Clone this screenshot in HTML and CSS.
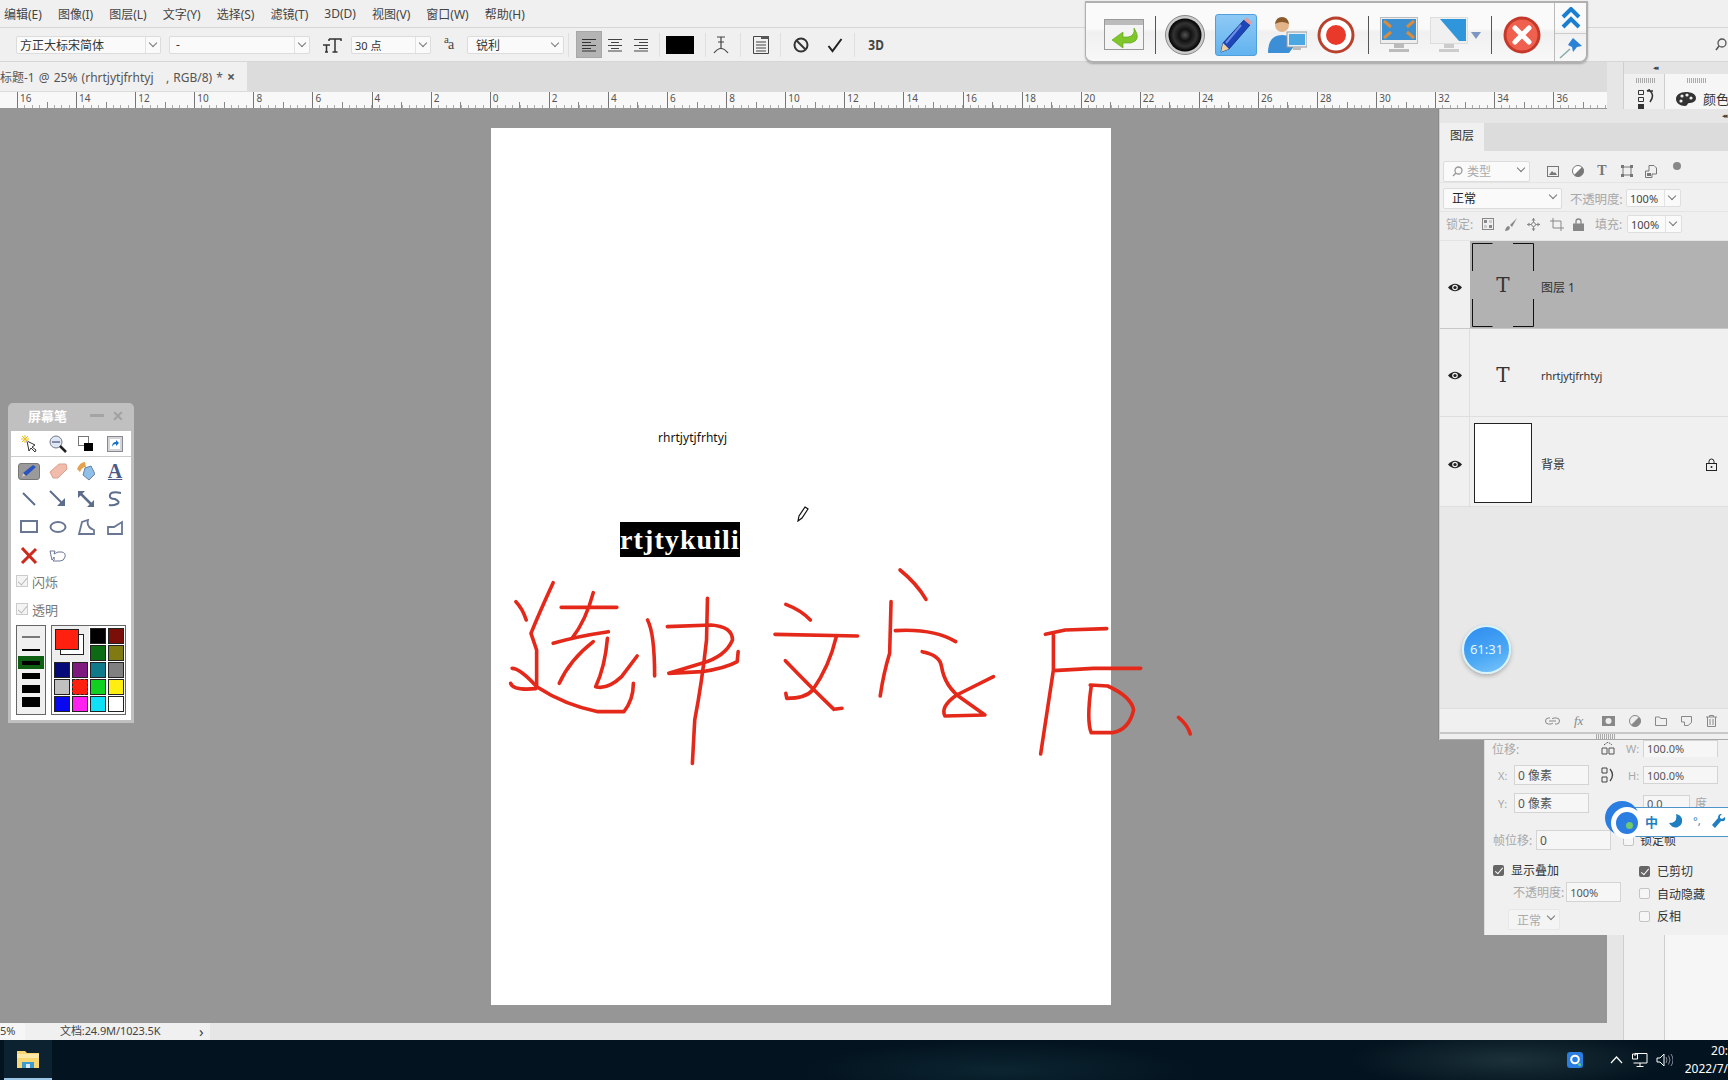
FILE: index.html
```html
<!DOCTYPE html>
<html lang="zh">
<head>
<meta charset="utf-8">
<title>Photoshop</title>
<link rel="stylesheet" href="styles.css">
</head>
<body>
<div class="app">
  <nav class="menu">
    <span>编辑(E)</span><span>图像(I)</span><span>图层(L)</span><span>文字(Y)</span><span>选择(S)</span><span>滤镜(T)</span><span>3D(D)</span><span>视图(V)</span><span>窗口(W)</span><span>帮助(H)</span>
  </nav>

  <div class="options">
    <div class="sel w-font">方正大标宋简体<i class="chev"></i></div>
    <div class="sel w-style">-<i class="chev"></i></div>
    <svg class="opt-tt" width="20" height="18" viewBox="0 0 20 18"><path d="M7 3h12v2M13 3v13M10.500 16h5M7 3v2M1 9h7M4.500 9v7M3 16h3" fill="none" stroke="#333" stroke-width="1.500"/></svg>
    <div class="sel w-size">30 点<i class="chev"></i></div>
    <span class="opt-aa"><sup>a</sup>a</span>
    <div class="sel w-aa">锐利<i class="chev"></i></div>
    <b class="vsep first"></b>
    <div class="align active"><svg width="14" height="14" viewBox="0 0 14 14"><path d="M0 1.500h14M0 4.500h9M0 7.500h14M0 10.500h9M0 13h14" stroke="#333"/></svg></div>
    <div class="align"><svg width="14" height="14" viewBox="0 0 14 14"><path d="M0 1.500h14M3 4.500h8M0 7.500h14M3 10.500h8M0 13h14" stroke="#444"/></svg></div>
    <div class="align"><svg width="14" height="14" viewBox="0 0 14 14"><path d="M0 1.500h14M5 4.500h9M0 7.500h14M5 10.500h9M0 13h14" stroke="#444"/></svg></div>
    <b class="vsep"></b>
    <div class="swatch"></div>
    <b class="vsep"></b>
    <svg class="opt-warp" width="16" height="20" viewBox="0 0 16 20"><path d="M4 2h8M8 2v11M5 7h6M1 18q7-9 14 0" fill="none" stroke="#444" stroke-width="1.200"/></svg>
    <b class="vsep"></b>
    <svg class="opt-panel" width="16" height="18" viewBox="0 0 16 18"><path d="M.500.500h15v17H.500zM3 6h10M3 9h10M3 12h10M3 15h10" fill="none" stroke="#444"/><path d="M8 0h8v3H8z" fill="#555"/></svg>
    <b class="vsep"></b>
    <svg class="opt-cancel" width="16" height="16" viewBox="0 0 16 16"><circle cx="8" cy="8" r="6.500" fill="none" stroke="#333" stroke-width="2"/><path d="M3.500 3.500l9 9" stroke="#333" stroke-width="2"/></svg>
    <svg class="opt-ok" width="16" height="16" viewBox="0 0 16 16"><path d="M1.500 9l4 5L14.500 2" fill="none" stroke="#222" stroke-width="2"/></svg>
    <b class="vsep"></b>
    <span class="opt-3d">3D</span>
    <svg class="opt-search" width="12" height="14" viewBox="0 0 12 14"><circle cx="7" cy="5" r="4" fill="none" stroke="#555" stroke-width="1.300"/><path d="M4 8l-3 4" stroke="#555" stroke-width="1.500"/></svg>
  </div>

  <div class="main">
    <div class="doc">
      <div class="tabs"><div class="tab"><span class="tab-title">标题-1 @ 25% (rhrtjytjfrhtyj &nbsp; , RGB/8) *</span><span class="tab-x">×</span></div></div>
      <div class="ruler">
        <span>16</span><span>14</span><span>12</span><span>10</span><span>8</span><span>6</span><span>4</span><span>2</span><span>0</span><span>2</span><span>4</span><span>6</span><span>8</span><span>10</span><span>12</span><span>14</span><span>16</span><span>18</span><span>20</span><span>22</span><span>24</span><span>26</span><span>28</span><span>30</span><span>32</span><span>34</span><span>36</span>
      </div>
      <div class="canvas">
        <div class="page">
          <span class="txt-small">rhrtjytjfrhtyj</span>
          <span class="txt-sel">rtjtykuili</span>
          <svg class="cursor" width="12" height="16" viewBox="0 0 12 16"><path d="M8 1l3 2-6 9-4 3 1-5z" fill="#fff" stroke="#111" stroke-width="1.200"/></svg>
        </div>
      </div>
      <div class="status"><span class="st-zoom">5%</span><span class="st-doc">文档:24.9M/1023.5K</span><span class="st-arrow">›</span></div>
    </div>
    <div class="strip"></div>
    <aside class="dock">
      <div class="dock-head">◂◂</div>
      <div class="dock-cols">
        <div class="dock-col c1">
          <i class="grip"></i>
          <svg width="18" height="20" viewBox="0 0 18 20"><path d="M1.500 1.500h5v4h-5zM1.500 8.500h5v4h-5z" fill="none" stroke="#333"/><path d="M1 15h6v5H1z" fill="#333"/><path d="M10 2h6M10 2l3-1.500M13 2q5 4 0 11" fill="none" stroke="#333" stroke-width="1.500"/></svg>
        </div>
        <div class="dock-col c2">
          <i class="grip"></i>
          <div class="dock-color">
            <svg width="20" height="16" viewBox="0 0 20 16"><path d="M10 1C4 1 0 4 0 8s4 7 9 7c3 0 2-3 4-3 3 0 7-1 7-5S15 1 10 1z" fill="#333"/><circle cx="6" cy="5" r="1.600" fill="#eee"/><circle cx="11" cy="4" r="1.600" fill="#eee"/><circle cx="15" cy="7" r="1.600" fill="#eee"/><circle cx="5" cy="10" r="1.600" fill="#eee"/></svg>
            <span>颜色</span>
          </div>
        </div>
      </div>
    </aside>
  </div>

  <footer class="taskbar">
    <div class="task-app">
      <svg width="22" height="20" viewBox="0 0 22 20"><path d="M0 2h8l2 2h12v15H0z" fill="#f7d774"/><path d="M0 5h22v4H0z" fill="#fbe9a8"/><path d="M5 13h12v6H5z" fill="#3d9bd0"/><path d="M9 15h4v4H9z" fill="#d5ecf7"/></svg>
    </div>
    <div class="tray">
      <svg width="16" height="16" viewBox="0 0 16 16"><rect width="16" height="16" rx="3" fill="#2a7de1"/><circle cx="8" cy="7.500" r="3.800" fill="none" stroke="#fff" stroke-width="2"/><circle cx="12.500" cy="12.500" r="1.500" fill="#5fd08a"/></svg>
      <svg class="tray-up" width="13" height="8" viewBox="0 0 13 8"><path d="M1 7l5.500-6L12 7" fill="none" stroke="#fff" stroke-width="1.200"/></svg>
      <svg class="tray-net" width="16" height="14" viewBox="0 0 16 14"><path d="M3 3V.500h12v9.500H1.500M8 10v3M4.500 13.500h7M.500 1h5v5H.500z" fill="none" stroke="#fff"/></svg>
      <svg class="tray-vol" width="17" height="14" viewBox="0 0 17 14"><path d="M1 5h3l4-4v12L4 9H1z" fill="none" stroke="#fff"/><path d="M10 4q2 3 0 6M12.500 2.500q3 4.500 0 9M15 1q4 6 0 12" fill="none" stroke="#889"/></svg>
      <div class="clock"><span>20:</span><span>2022/7/</span></div>
    </div>
  </footer>
</div>

<!-- 悬浮录屏工具条 -->
<div class="rec-bar">
  <svg class="t-ret" width="40" height="36" viewBox="0 0 40 36"><rect x=".5" y="2.500" width="39" height="30" fill="#f4f4f4" stroke="#999"/><rect x="1" y="3" width="38" height="5" fill="#bbb"/><path d="M30 11q8 12-3 15h-8v5L8 23l11-8v5h5q7-1 6-9z" fill="#7fc62a" stroke="#5a9e18" stroke-width=".6"/></svg>
  <b class="t-sep"></b>
  <svg class="t-cam" width="40" height="40" viewBox="0 0 40 40"><defs><radialGradient id="sp"><stop offset="0" stop-color="#555"/><stop offset=".35" stop-color="#111"/><stop offset=".7" stop-color="#333"/><stop offset="1" stop-color="#000"/></radialGradient></defs><circle cx="20" cy="20" r="19.500" fill="#ccc" stroke="#888"/><circle cx="20" cy="20" r="16.500" fill="url(#sp)"/></svg>
  <div class="t-pen"><svg width="34" height="36" viewBox="0 0 34 36"><path d="M25 3l6 5L10 32 2 35l2-9z" fill="#1d46b8" stroke="#0d2a80" stroke-width=".8"/><path d="M25 3l3-2.500 5 5L31 8z" fill="#e29a9a"/><path d="M4 26l6 6-8 3z" fill="#edcf9f"/><path d="M22 8L7 26" stroke="#6d8fe8" stroke-width="2"/></svg></div>
  <svg class="t-user" width="40" height="36" viewBox="0 0 40 36"><circle cx="15" cy="8" r="7" fill="#e2b48a"/><path d="M8 7q1-7 7-7t7 7q-7-4-14 0z" fill="#8a5a2a"/><path d="M1 36q0-18 14-18 12 0 13 10l-6 8z" fill="#3c8fd6"/><rect x="20" y="15" width="20" height="15" fill="#e6eef5" stroke="#999"/><rect x="22" y="17" width="16" height="11" fill="#4ba7e2"/><path d="M26 30h8v3h-8z" fill="#bbb"/></svg>
  <svg class="t-rec" width="38" height="38" viewBox="0 0 38 38"><circle cx="19" cy="19" r="18.500" fill="#b8402c"/><circle cx="19" cy="19" r="15.500" fill="#fff"/><circle cx="19" cy="19" r="10" fill="#e8392a"/></svg>
  <b class="t-sep s2"></b>
  <svg class="t-mon" width="38" height="36" viewBox="0 0 38 36"><rect x=".5" y=".5" width="37" height="26" fill="#eee" stroke="#bbb"/><rect x="2" y="2" width="34" height="21" fill="#3b8fd0"/><path d="M4 4l7 6M34 4l-7 6M4 21l7-6M34 21l-7-6" stroke="#d98c3c" stroke-width="3"/><path d="M14 27h10v4H14zM9 32h20v3H9z" fill="#bbb"/></svg>
  <svg class="t-mon2" width="38" height="36" viewBox="0 0 38 36"><rect x=".5" y=".5" width="37" height="26" fill="#f0f0f0" stroke="#ddd"/><path d="M10 2h26v22h-7z" fill="#2f96dc"/><path d="M14 27h10v4H14zM9 32h20v3H9z" fill="#ccc"/></svg>
  <i class="t-drop"></i>
  <b class="t-sep s3"></b>
  <svg class="t-close" width="38" height="38" viewBox="0 0 38 38"><circle cx="19" cy="19" r="18.500" fill="#c5392a"/><circle cx="19" cy="19" r="15.500" fill="#f0604e"/><path d="M12 12l14 14M26 12L12 26" stroke="#fff" stroke-width="5" stroke-linecap="round"/></svg>
  <div class="t-side">
    <div class="t-side-a"><svg width="20" height="22" viewBox="0 0 20 22"><path d="M2 10l8-8 8 8M2 20l8-8 8 8" fill="none" stroke="#1b7fd0" stroke-width="4"/></svg></div>
    <div class="t-side-b"><svg width="24" height="22" viewBox="0 0 24 22"><path d="M14 1l9 8-5 1-4 5-1-5-4-2 2-3z" fill="#2a82d6"/><path d="M11 12L1 21" stroke="#8aa" stroke-width="1.500"/></svg></div>
  </div>
</div>

<!-- 屏幕笔 -->
<div class="pen-win">
  <div class="pen-head"><span class="pen-title">屏幕笔</span><span class="pen-min"></span><span class="pen-x">✕</span></div>
  <div class="pen-body">
    <div class="pen-tools top">
      <svg width="18" height="18" viewBox="0 0 18 18"><path d="M7 6l2 10 2-3 4 4 1-2-4-3 3-2z" fill="#fff" stroke="#333"/><path d="M5 0v8M1 4h8M2 1l6 6M8 1L2 7" stroke="#e8c020"/></svg>
      <svg width="18" height="18" viewBox="0 0 18 18"><circle cx="7" cy="7" r="6" fill="#dde8f5" stroke="#778"/><path d="M11 11l6 6" stroke="#222" stroke-width="2.500"/><path d="M3 7h8" stroke="#88a" stroke-width="2"/></svg>
      <svg width="16" height="16" viewBox="0 0 16 16"><rect x=".5" y=".5" width="10" height="9" fill="#fff" stroke="#777"/><rect x="6" y="7" width="9" height="8" fill="#000"/></svg>
      <svg width="16" height="16" viewBox="0 0 16 16"><rect x=".5" y=".5" width="15" height="15" fill="#d5d5d5" stroke="#889"/><rect x="3" y="3" width="10" height="10" fill="#fff"/><path d="M5 11q0-5 4-5V4l3 3-3 3V8q-3 0-4 3z" fill="#1a6fc0"/></svg>
    </div>
    <div class="pen-tools">
      <div class="tool-on"><svg width="16" height="14" viewBox="0 0 16 14"><path d="M12 1l3 2L5 12l-4 1 1-4z" fill="#2a52c0"/><path d="M1 13l1-4 3 3z" fill="#e8c99a"/></svg></div>
      <svg width="20" height="16" viewBox="0 0 20 16"><path d="M2 9l9-8h7l1 5-9 9H5z" fill="#f1bcab" stroke="#d9a090"/></svg>
      <svg width="18" height="20" viewBox="0 0 18 20"><path d="M8 7l6-2 4 8-6 6-6-5z" fill="#8ec0ea" stroke="#6a7f9e"/><path d="M0 8q3-7 8-7l1 5q-4 0-6 5z" fill="#e4a24e"/></svg>
      <span class="tool-a">A</span>
      <svg width="16" height="16" viewBox="0 0 16 16"><path d="M2 2l12 12" stroke="#5c6d8e" stroke-width="2"/></svg>
      <svg width="18" height="18" viewBox="0 0 18 18"><path d="M1 1l12 12" stroke="#5c6d8e" stroke-width="2"/><path d="M16 16H8l8-8z" fill="#5c6d8e"/></svg>
      <svg width="18" height="18" viewBox="0 0 18 18"><path d="M4 4l10 10" stroke="#5c6d8e" stroke-width="2.500"/><path d="M1 1h7L1 8zM17 17h-7l7-7z" fill="#5c6d8e"/></svg>
      <svg width="14" height="16" viewBox="0 0 14 16"><path d="M13 2Q3 0 2 4t5 4q6 3 2 5t-8 1" fill="none" stroke="#5c6d8e" stroke-width="2"/></svg>
      <svg width="18" height="14" viewBox="0 0 18 14"><rect x="1" y="1" width="16" height="11" fill="none" stroke="#6a7794" stroke-width="2"/></svg>
      <svg width="18" height="14" viewBox="0 0 18 14"><ellipse cx="9" cy="7" rx="7.500" ry="5" fill="none" stroke="#6a7794" stroke-width="2"/></svg>
      <svg width="17" height="16" viewBox="0 0 17 16"><path d="M1 15L4 3l6-2q-2 7 6 10v4z" fill="none" stroke="#6a7794" stroke-width="1.800"/></svg>
      <svg width="17" height="15" viewBox="0 0 17 15"><path d="M1 14V7h6l8-5v12z" fill="none" stroke="#6a7794" stroke-width="1.800"/></svg>
      <svg width="18" height="17" viewBox="0 0 18 17"><path d="M2 1l14 15M16 2L2 16" stroke="#cc2a1c" stroke-width="3"/></svg>
      <svg width="17" height="14" viewBox="0 0 17 14"><path d="M1 3h5l-1 3q4-3 8-2t3 5-5 4H4q2-1 1-4-1 2-2 3z" fill="none" stroke="#6a7794"/></svg>
    </div>
    <label class="pen-check"><i class="ghost-check"></i>闪烁</label>
    <label class="pen-check"><i class="ghost-check"></i>透明</label>
    <div class="pen-pal">
      <div class="widths">
        <i class="l1"></i><i class="l2"></i><i class="l3 on"></i><i class="l4"></i><i class="l5"></i><i class="l6"></i>
      </div>
      <div class="colors">
        <div class="cur"><span class="back"></span><span class="front"></span></div>
        <i class="k1"></i><i class="k2"></i><i class="k3"></i><i class="k4"></i>
        <i class="k5"></i><i class="k6"></i><i class="k7"></i><i class="k8"></i>
        <i class="k9"></i><i class="k10"></i><i class="k11"></i><i class="k12"></i>
        <i class="k13"></i><i class="k14"></i><i class="k15"></i><i class="k16"></i>
      </div>
    </div>
  </div>
</div>

<!-- 浮动面板 -->
<div class="float">
  <section class="layers">
    <div class="l-head">◂◂</div>
    <div class="l-tabs"><div class="l-tab">图层</div></div>
    <div class="l-row filter">
      <div class="sel w-filter"><svg width="11" height="11" viewBox="0 0 11 11"><circle cx="6.500" cy="4.500" r="3.500" fill="none" stroke="#999" stroke-width="1.300"/><path d="M4 7l-3 3" stroke="#999" stroke-width="1.500"/></svg><span>类型</span><i class="chev"></i></div>
      <div class="f-icons">
        <svg width="12" height="11" viewBox="0 0 12 11"><rect x=".5" y=".5" width="11" height="10" fill="none" stroke="#777"/><path d="M2 9l3-4 2 2 1-1 2 3z" fill="#777"/></svg>
        <svg width="12" height="12" viewBox="0 0 12 12"><circle cx="6" cy="6" r="5.500" fill="#fff" stroke="#777"/><path d="M10 2a5.500 5.500 0 0 1-8 8z" fill="#777"/></svg>
        <span class="f-t">T</span>
        <svg width="12" height="12" viewBox="0 0 12 12"><path d="M2 2h8v8H2z" fill="none" stroke="#777"/><path d="M0 0h3v3H0zM9 0h3v3H9zM0 9h3v3H0zM9 9h3v3H9z" fill="#777"/></svg>
        <svg width="12" height="13" viewBox="0 0 12 13"><path d="M4 .5h5l2.500 2.500v6H7v3.500H.5V6H4z" fill="none" stroke="#777"/><path d="M2 8h4v3H2z" fill="#777"/></svg>
        <i class="f-dot"></i>
      </div>
    </div>
    <div class="l-row blend">
      <div class="sel w-blend">正常<i class="chev"></i></div>
      <span class="dim lab-op">不透明度:</span>
      <div class="pct"><span>100%</span><i class="chev"></i></div>
    </div>
    <div class="l-row lock">
      <span class="dim lab-lock">锁定:</span>
      <div class="lock-icons">
        <svg width="12" height="12" viewBox="0 0 12 12"><rect x=".5" y=".5" width="11" height="11" fill="none" stroke="#888"/><path d="M2 2h3v3H2zM7 7h3v3H7z" fill="#888"/><path d="M7 2h3v3H7zM2 7h3v3H2z" fill="#ccc"/></svg>
        <svg width="14" height="13" viewBox="0 0 14 13"><path d="M13 0L6 7l2 2zM5 8q-3 0-4 5 4 0 5-3z" fill="#888"/></svg>
        <svg width="13" height="13" viewBox="0 0 13 13"><path d="M6.500 0v13M0 6.500h13" stroke="#888"/><path d="M6.500 0l2 2.500h-4zM6.500 13l2-2.500h-4zM0 6.500l2.500-2v4zM13 6.500l-2.500-2v4z" fill="#888"/><circle cx="6.500" cy="6.500" r="2" fill="#f0f0f0" stroke="#888"/></svg>
        <svg width="14" height="13" viewBox="0 0 14 13"><path d="M0 3h11v10M3 0v10h11" fill="none" stroke="#888"/></svg>
        <svg width="11" height="13" viewBox="0 0 11 13"><path d="M3 6V3.500a2.500 2.500 0 0 1 5 0V6" fill="none" stroke="#888" stroke-width="1.300"/><rect y="5.500" width="11" height="7.500" fill="#888"/></svg>
      </div>
      <span class="dim lab-fill">填充:</span>
      <div class="pct"><span>100%</span><i class="chev"></i></div>
    </div>

    <div class="layer sel-layer">
      <div class="eye-cell"><svg class="eye" width="14" height="9" viewBox="0 0 14 9"><path d="M0 4.500Q7-3 14 4.500 7 12 0 4.500z" fill="#222"/><circle cx="7" cy="4.500" r="2.800" fill="#eee"/><circle cx="7" cy="4.500" r="1.600" fill="#222"/></svg></div>
      <div class="thumb t-text"><svg class="brackets" width="62" height="84" viewBox="0 0 62 84"><path d="M.5 28V.5h20M41 .5h20.500V28M.5 56v27.500h20M41 83.500h20.500V56" fill="none" stroke="#111"/></svg><span>T</span></div>
      <span class="l-name">图层 1</span>
    </div>
    <div class="layer">
      <div class="eye-cell"><svg class="eye" width="14" height="9" viewBox="0 0 14 9"><path d="M0 4.500Q7-3 14 4.500 7 12 0 4.500z" fill="#222"/><circle cx="7" cy="4.500" r="2.800" fill="#eee"/><circle cx="7" cy="4.500" r="1.600" fill="#222"/></svg></div>
      <div class="thumb t-text plain"><span>T</span></div>
      <span class="l-name small">rhrtjytjfrhtyj</span>
    </div>
    <div class="layer bg">
      <div class="eye-cell"><svg class="eye" width="14" height="9" viewBox="0 0 14 9"><path d="M0 4.500Q7-3 14 4.500 7 12 0 4.500z" fill="#222"/><circle cx="7" cy="4.500" r="2.800" fill="#eee"/><circle cx="7" cy="4.500" r="1.600" fill="#222"/></svg></div>
      <div class="thumb t-bg"></div>
      <span class="l-name">背景</span>
      <svg class="l-lock" width="11" height="13" viewBox="0 0 11 13"><path d="M3 5.500V3.500a2.500 2.500 0 0 1 5 0v2" fill="none" stroke="#222"/><rect x=".5" y="5.500" width="10" height="7" fill="none" stroke="#222"/><circle cx="5.500" cy="9" r="1" fill="#222"/></svg>
    </div>
    <div class="l-empty"></div>
    <div class="l-foot">
      <svg width="15" height="8" viewBox="0 0 15 8"><path d="M5 1H3.500a3 3 0 0 0 0 6H6a3 3 0 0 0 2-1M10 7h1.500a3 3 0 0 0 0-6H9a3 3 0 0 0-2 1M4 4h7" fill="none" stroke="#888"/></svg>
      <span class="fx">fx</span>
      <svg width="13" height="10" viewBox="0 0 13 10"><rect width="13" height="10" fill="#888"/><circle cx="6.500" cy="5" r="3" fill="#eee"/></svg>
      <svg width="12" height="12" viewBox="0 0 12 12"><circle cx="6" cy="6" r="5.500" fill="#eee" stroke="#888"/><path d="M10 2a5.500 5.500 0 0 1-8 8z" fill="#888"/></svg>
      <svg width="12" height="10" viewBox="0 0 12 10"><path d="M.5 1h4l1 1.500h6v7H.5z" fill="none" stroke="#888"/></svg>
      <svg width="11" height="10" viewBox="0 0 11 10"><path d="M.5.500h10v6L7 9.500H3.500V6H.5z" fill="none" stroke="#888"/></svg>
      <svg width="11" height="12" viewBox="0 0 11 12"><path d="M0 2h11M3.500 2V.5h4V2M1.500 2v9.500h8V2M4 4v6M7 4v6" fill="none" stroke="#888"/></svg>
    </div>
    <div class="l-grip"><i class="grip"></i></div>
  </section>

  <section class="props">
    <div class="p-row r1">
      <span class="dim p-lab">位移:</span>
      <svg class="p-ico" width="14" height="13" viewBox="0 0 14 13"><path d="M1 6h5v6H1zM8 6h5v6H8z" fill="none" stroke="#555"/><path d="M3 3l4-3 4 3" fill="none" stroke="#555" stroke-dasharray="2 1"/></svg>
      <span class="dim p-w">W:</span>
      <span class="inp i-wh">100.0%</span>
    </div>
    <div class="p-row r2">
      <span class="dim p-xy">X:</span>
      <span class="inp i-xy">0 像素</span>
      <svg class="p-ico b" width="14" height="16" viewBox="0 0 14 16"><path d="M1 1h5v5H1zM1 10h5v5H1z" fill="none" stroke="#444"/><path d="M9 2q5 6 0 12" fill="none" stroke="#444" stroke-width="1.300"/></svg>
      <span class="dim p-h">H:</span>
      <span class="inp i-wh">100.0%</span>
    </div>
    <div class="p-row r3">
      <span class="dim p-xy">Y:</span>
      <span class="inp i-xy">0 像素</span>
      <span class="inp i-ang">0.0</span>
      <span class="dim p-deg">度</span>
    </div>
    <div class="p-row r4">
      <span class="dim p-off">帧位移:</span>
      <span class="inp i-xy off">0</span>
      <i class="cb empty lock-frame"></i>
      <span class="p-txt">锁定帧</span>
    </div>
    <div class="p-bottom">
      <div class="p-left">
        <div class="p-chk"><i class="cb on"></i><span>显示叠加</span></div>
        <div class="p-op"><span class="dim">不透明度:</span><span class="inp i-op">100%</span></div>
        <div class="sel w-mode">正常<i class="chev"></i></div>
      </div>
      <div class="p-right">
        <div class="p-chk"><i class="cb on"></i><span>已剪切</span></div>
        <div class="p-chk"><i class="cb empty"></i><span>自动隐藏</span></div>
        <div class="p-chk"><i class="cb empty"></i><span>反相</span></div>
      </div>
    </div>
  </section>
</div>

<!-- 计时器 -->
<div class="timer">61:31</div>

<!-- 输入法状态条 -->
<div class="ime">
  <span class="ime-q"><i></i></span>
  <span class="ime-zh">中</span>
  <svg width="13" height="14" viewBox="0 0 13 14"><path d="M7 0q2 9-7 9 4 6 9 4t4-8Q12 1 7 0z" fill="#1f7fc0"/></svg>
  <span class="ime-p">°,</span>
  <svg width="14" height="14" viewBox="0 0 14 14"><path d="M13 3l-3 2-2-1V2l2-2Q6-.5 6 4L0 11l3 3 6-7q5 1 4-4z" fill="#1f7fc0"/></svg>
</div>

<!-- 屏幕笔手写批注 -->
<svg class="ink" width="740" height="380" viewBox="0 0 1568 1140" preserveAspectRatio="none">
  <g fill="none" stroke="#e4291a" stroke-linecap="round" stroke-linejoin="round">
    <path d="M76 605Q90 625 98 660"/>
    <path d="M155 548Q125 640 108 700L120 750V860"/>
    <path d="M68 805Q85 805 120 860Q180 915 250 935H305Q325 900 325 850"/>
    <path d="M65 850Q70 872 118 866"/>
    <path d="M172 622H290M240 578Q225 660 195 715M155 730Q200 710 272 695"/>
    <path d="M240 725Q190 780 168 850M270 715Q265 800 245 860Q270 870 300 830L333 768"/>
    <path d="M355 660Q370 700 370 828"/>
    <path d="M397 680L490 675Q535 680 535 720Q520 770 470 790L400 820L470 815Q520 805 545 785L547 755"/>
    <path d="M482 595L480 720Q470 850 455 960L450 1090"/>
    <path d="M648 613Q680 630 700 660M625 703L800 708"/>
    <path d="M755 710Q740 800 705 870Q690 895 650 895L648 880M647 782Q700 860 750 928L767 925"/>
    <path d="M890 510Q925 550 945 598M871 605L868 760Q855 820 848 888M880 692Q960 685 1008 725"/>
    <path d="M937 755Q975 765 978 800Q985 860 1020 895L1070 945L985 948Q975 920 1010 885L1088 830"/>
    <path d="M1198 703L1240 690L1328 686M1215 705V810L1188 1062M1215 812L1300 805H1400"/>
    <path d="M1293 855L1330 858Q1380 890 1385 930Q1375 990 1340 998H1295Q1285 960 1295 860"/>
    <path d="M1480 952Q1500 975 1505 1002"/>
  </g>
</svg>
</body>
</html>
```

FILE: styles.css
```css
* { box-sizing: border-box; }
html, body { margin: 0; height: 100%; overflow: hidden; }
body {
  position: relative;
  width: 1728px;
  height: 1080px;
  font: 12px "Noto Sans", "Noto Sans CJK SC", sans-serif;
  color: #333;
  background: #969696;
}
i { display: block; font-style: normal; }
b { font-weight: normal; }
svg { display: block; flex: none; }

.app { display: flex; flex-direction: column; height: 1080px; }

/* menu */
.menu {
  flex: 0 0 28px;
  display: flex;
  align-items: center;
  gap: 16px;
  padding: 0 0 0 4px;
  background: #f0f0f0;
  border-bottom: 1px solid #d6d6d6;
  font-size: 12px;
  color: #444;
}

/* options bar */
.options {
  flex: 0 0 34px;
  display: flex;
  align-items: center;
  padding: 0 0 0 16px;
  background: #f0f0f0;
  border-bottom: 1px solid #d6d6d6;
}
.sel {
  position: relative;
  display: flex;
  align-items: center;
  height: 18px;
  padding-left: 3px;
  background: #fafafa;
  border: 1px solid #dcdcdc;
  border-radius: 2px;
  font-size: 12px;
  color: #333;
}
.chev {
  margin-left: auto;
  width: 15px;
  height: 100%;
  border-left: 1px solid #e2e2e2;
  position: relative;
}
.chev::after {
  content: "";
  position: absolute;
  left: 4px;
  top: 3px;
  width: 5px;
  height: 5px;
  border: solid #777;
  border-width: 0 1px 1px 0;
  transform: rotate(45deg);
}
.w-font { width: 145px; }
.w-style { width: 141px; margin-left: 8px; padding-left: 6px; }
.opt-tt { margin-left: 12px; }
.w-size { width: 80px; margin-left: 9px; font-size: 11px; }
.opt-aa { margin-left: 13px; width: 15px; font: 14px "Liberation Serif", serif; color: #444; letter-spacing: -1px; }
.opt-aa sup { font-size: 11px; line-height: 0; }
.w-aa { width: 97px; margin-left: 8px; padding-left: 8px; }
.w-aa .chev { border-left: 0; }
.vsep { flex: none; width: 1px; height: 24px; background: #dfdfdf; margin: 0 5px; }
.vsep.first { margin: 0 7px 0 4px; }
.align { display: flex; align-items: center; justify-content: center; width: 26px; height: 27px; }
.align.active { background: #b4b4b4; border: 1px solid #a8a8a8; }
.swatch { width: 28px; height: 18px; background: #000; margin: 0 6px 0 1px; }
.opt-warp { margin: 0 6px 0 2px; }
.opt-panel { margin: 0 6px 0 7px; }
.opt-cancel { margin-left: 7px; }
.opt-ok { margin: 0 6px 0 18px; }
.opt-3d { margin-left: 7px; font-weight: 700; font-size: 14px; color: #444; transform: scaleX(.85); }
.opt-search { margin-left: auto; transform: translateX(-1px); }

/* main */
.main { flex: 1; display: flex; min-height: 0; }
.doc { flex: 0 0 1607px; display: flex; flex-direction: column; min-width: 0; }
.tabs { flex: 0 0 30px; background: #dcdcdc; }
.tab {
  display: flex;
  align-items: center;
  width: 247px;
  height: 29px;
  background: #f0f0f0;
  white-space: pre;
  font-size: 12px;
  color: #555;
}
.tab-title { flex: 0 0 224px; font-size: 12px; word-spacing: 1px; }
.tab-x { margin-left: 3px; font-weight: 700; font-size: 14px; color: #555; }

.ruler {
  flex: 0 0 16px;
  display: flex;
  overflow: hidden;
  padding-left: 17px;
  background: #f8f8f8;
}
.ruler span {
  flex: 0 0 59.100px;
  height: 16px;
  padding: 1px 0 0 3px;
  font-size: 10px;
  line-height: 11px;
  color: #555;
  background:
    linear-gradient(#777, #777) 0 0 / 1px 100% no-repeat,
    linear-gradient(#888, #888) 29.500px 100% / 1px 6px no-repeat,
    repeating-linear-gradient(90deg, #aaa 0 1px, transparent 1px 7.390px) 0 100% / 100% 3px no-repeat;
}

.canvas { flex: 1; min-height: 0; padding: 20px 0 0 491px; background: #969696; }
.page { position: relative; width: 620px; height: 877px; background: #fff; }
.txt-small { position: absolute; left: 167px; top: 302px; font-size: 12px; line-height: 16px; letter-spacing: .05px; color: #111; }
.txt-sel {
  position: absolute;
  left: 129px;
  top: 394px;
  width: 120px;
  height: 35px;
  background: #000;
  color: #fff;
  font: 700 28px/35px "Liberation Serif", serif;
  letter-spacing: 1.100px;
  white-space: nowrap;
  overflow: hidden;
}
.cursor { position: absolute; left: 306px; top: 378px; }

.status { flex: 0 0 17px; display: flex; align-items: center; background: #e6e6e6; font-size: 11px; color: #444; }
.st-zoom { width: 25px; height: 100%; background: #f6f6f6; line-height: 16px; }
.st-doc { width: 185px; height: 100%; background: #f0f0f0; padding-left: 35px; line-height: 16px; letter-spacing: -.1px; }
.st-arrow { position: relative; left: -11px; font-size: 15px; line-height: 15px; }

.strip { flex: 0 0 17px; background: #e6e6e6; border-right: 1px solid #cfcfcf; }
.dock { flex: 0 0 104px; display: flex; flex-direction: column; background: #f0f0f0; }
.dock-head { flex: 0 0 12px; background: #e4e4e4; font-size: 7px; line-height: 12px; padding-left: 29px; color: #444; letter-spacing: -2px; }
.dock-cols { flex: 1; display: flex; }
.dock-col { display: flex; flex-direction: column; align-items: center; }
.dock-col.c1 { flex: 0 0 41px; border-right: 1px solid #cfcfcf; padding-left: 4px; }
.dock-col.c2 { flex: 1; background: #f6f6f6; }
.grip { width: 20px; height: 5px; margin: 4px 0 6px; background: repeating-linear-gradient(90deg, #aaa 0 1px, transparent 1px 2px); }
.dock-color { display: flex; align-items: center; gap: 7px; margin-left: 11px; font-size: 13px; white-space: nowrap; }

/* taskbar */
.taskbar {
  flex: 0 0 40px;
  display: flex;
  justify-content: space-between;
  background:
    radial-gradient(ellipse 160px 30px at 1510px 20px, #1b3138, transparent),
    radial-gradient(ellipse 200px 30px at 1000px 30px, #0b2530, transparent),
    #03131f;
  color: #fff;
}
.task-app { width: 48px; margin-left: 4px; height: 100%; background: #0d2230; border-bottom: 2px solid #9cc6e6; display: flex; align-items: center; justify-content: center; padding-bottom: 1px; }
.tray { display: flex; align-items: center; width: 161px; }
.tray-up { margin-left: 27px; }
.tray-net { margin-left: 9px; }
.tray-vol { margin-left: 8px; }
.clock { flex: 1; display: flex; flex-direction: column; align-items: flex-end; margin-left: 7px; font-size: 12px; line-height: 18px; white-space: nowrap; overflow: hidden; }

/* recorder bar */
.rec-bar {
  position: absolute;
  left: 1085px;
  top: 1px;
  width: 503px;
  height: 62px;
  display: flex;
  align-items: center;
  padding-top: 6px;
  background: linear-gradient(#fafafa 0 44%, #f0f0f0 50%, #f8f8f8);
  border: 2px solid #b0b0b0;
  border-width: 2px 2px 2px 1px;
  border-radius: 0 0 8px 8px;
  box-shadow: 0 1px 2px rgba(0,0,0,.25);
}
.t-ret { margin-left: 18px; }
.t-sep { flex: none; width: 1px; height: 38px; background: #555; margin: 0 9px 0 11px; }
.t-sep.s2 { margin: 0 11px 0 13px; }
.t-sep.s3 { margin: 0 11px 0 10px; }
.t-pen { flex: none; display: flex; align-items: center; justify-content: center; width: 42px; height: 42px; margin: 0 10px; background: linear-gradient(#8ec9f5, #62b3ef); border: 1px solid #4f9fdd; border-radius: 3px; }
.t-user { margin-right: 10px; }
.t-mon { margin-right: 12px; }
.t-drop { flex: none; width: 0; height: 0; margin-left: 3px; border: 5px solid transparent; border-top: 7px solid #7b97bf; border-bottom: 0; }
.t-side { margin-left: auto; flex: 0 0 32px; align-self: stretch; margin-top: -6px; display: flex; flex-direction: column; border-left: 1px solid #bbb; }
.t-side-a { flex: 0 0 31px; display: flex; align-items: center; justify-content: center; border-bottom: 1px solid #ccc; }
.t-side-b { flex: 1; display: flex; align-items: center; justify-content: center; }

/* screen pen */
.pen-win {
  position: absolute;
  left: 8px;
  top: 403px;
  width: 126px;
  height: 320px;
  padding: 0 3px 3px;
  background: #c0c0c0;
  border-radius: 5px 5px 0 0;
}
.pen-head { display: flex; align-items: center; height: 28px; padding-bottom: 3px; color: #fff; }
.pen-title { margin-left: 17px; font-size: 13px; font-weight: 700; }
.pen-min { width: 14px; height: 3px; background: #a4a4a4; margin-left: 23px; }
.pen-x { margin-left: 8px; font-size: 14px; font-weight: 700; color: #a0a0a0; }
.pen-body { height: 289px; background: #fff; }
.pen-tools { display: grid; grid-template-columns: repeat(4, 28.600px); grid-auto-rows: 28px; padding-left: 4px; justify-items: center; align-items: center; }
.pen-tools.top { grid-auto-rows: 25px; border-bottom: 1px solid #ccc; height: 26px; }
.tool-on { display: flex; align-items: center; justify-content: center; width: 22px; height: 17px; background: #9a9a9a; border: 1px solid #777; border-radius: 3px; }
.tool-a { font: 700 20px/20px "Liberation Serif", serif; color: #4c5a88; text-decoration: underline; text-decoration-thickness: 1px; }
.pen-check { display: flex; align-items: center; gap: 4px; height: 28px; padding: 0 0 4px 5px; font-size: 13px; color: #777; }
.ghost-check { position: relative; width: 12px; height: 12px; background: #f4f4f4; border: 1px solid #ccc; }
.ghost-check::after { content: ""; position: absolute; left: 3px; top: 0; width: 4px; height: 8px; border: solid #bbb; border-width: 0 1.500px 1.500px 0; transform: rotate(40deg); }
.pen-pal { display: flex; gap: 5px; padding-left: 5px; height: 90px; }
.widths { width: 30px; border: 1px solid #666; background: #f0f0f0; padding-top: 4px; display: flex; flex-direction: column; align-items: stretch; }
.widths i { position: relative; height: 13px; flex: none; }
.widths i::after { content: ""; position: absolute; left: 5px; right: 5px; top: 50%; background: #000; transform: translateY(-50%); }
.widths .l1::after { height: 1px; }
.widths .l2::after { height: 2px; }
.widths .l3 { background: #0d5f12; margin: 0 1px; }
.widths .l3::after { height: 4px; left: 4px; right: 4px; }
.widths .l4::after { height: 6px; }
.widths .l5::after { height: 8px; }
.widths .l6::after { height: 10px; }
.colors { width: 75px; border: 1px solid #666; display: grid; grid-template-columns: repeat(4, 18px); grid-auto-rows: 17px; padding: 2px 0 0 2px; align-items: start; }
.colors i { width: 16px; height: 16px; border: 1px solid #222; }
.cur { grid-column: span 2; grid-row: span 2; position: relative; background: #eee; margin: -2px 0 0 -2px; width: 37px; height: 36px; }
.cur .front { position: absolute; left: 3px; top: 3px; width: 24px; height: 21px; background: #ff2010; border: 1px solid #222; z-index: 1; }
.cur .back { position: absolute; left: 8px; top: 8px; width: 24px; height: 21px; background: #fff; border: 1px solid #222; }
.k1 { background: #000; } .k2 { background: #7a0f0a; }
.k3 { background: #0c6b12; } .k4 { background: #7f7a12; }
.k5 { background: #050a78; } .k6 { background: #7f1a80; } .k7 { background: #0f7a8a; } .k8 { background: #808080; }
.k9 { background: #c0c0c0; } .colors .k10 { background: #ff2010; border-style: dashed; }
.k11 { background: #10d020; } .k12 { background: #ffee10; }
.k13 { background: #0808f0; } .k14 { background: #ff20f0; } .k15 { background: #10e0f5; } .k16 { background: #fff; }

/* floating panels */
.float { position: absolute; left: 1439px; top: 109px; width: 289px; display: flex; flex-direction: column; align-items: flex-end; }
.layers { width: 289px; height: 631px; display: flex; flex-direction: column; background: #f0f0f0; border-left: 1px solid #d0d0d0; box-shadow: -1px 0 0 #8a8a8a; }
.l-head { flex: 0 0 14px; background: #e6e6e6; font-size: 7px; line-height: 13px; text-align: right; padding-right: 2px; letter-spacing: -2px; color: #444; }
.l-tabs { flex: 0 0 28px; background: #dcdcdc; }
.l-tab { width: 44px; height: 28px; background: #f0f0f0; text-align: center; line-height: 26px; font-size: 12px; }
.l-row { display: flex; align-items: center; border-bottom: 1px solid #e4e4e4; padding-left: 3px; }
.l-row.filter { flex: 0 0 32px; padding-top: 9px; }
.l-row.blend { flex: 0 0 29px; padding-top: 2px; }
.l-row.lock { flex: 0 0 29px; padding: 0 0 4px 6px; }
.w-filter { width: 87px; height: 21px; padding-left: 8px; gap: 4px; color: #aaa; }
.w-filter .chev { border: 0; }
.w-blend { width: 119px; height: 21px; padding-left: 8px; color: #222; }
.w-blend .chev { border: 0; }
.f-icons { display: flex; align-items: center; padding-left: 17px; gap: 12.500px; color: #777; }
.f-t { font: 700 14px/14px "Liberation Serif", serif; width: 12px; text-align: center; }
.f-dot { width: 8px; height: 8px; border-radius: 50%; background: #888; margin: -10px 0 0 3px; }
.dim { color: #a8a8a8; white-space: nowrap; }
.lab-op { margin-left: 8px; width: 56px; font-size: 12.500px; letter-spacing: -.2px; }
.lab-lock { width: 36px; font-size: 12px; }
.lock-icons { display: flex; align-items: center; gap: 9.500px; padding-right: 11px; }
.lab-fill { width: 32px; font-size: 12px; }
.pct { display: flex; align-items: center; width: 55px; height: 18px; background: #fafafa; border: 1px solid #dedede; border-radius: 2px; font-size: 11px; padding-left: 3px; color: #444; }
.pct .chev { width: 16px; }
.layer { display: flex; align-items: center; flex: 0 0 88px; border-bottom: 1px solid #dedede; }
.layer.bg { flex: 0 0 90px; }
.sel-layer { background: linear-gradient(90deg, #f0f0f0 0 30px, #b2b2b2 30px); border-bottom-color: #c8c8c8; }
.eye-cell { flex: 0 0 30px; align-self: stretch; display: flex; align-items: center; justify-content: center; border-right: 1px solid #dedede; padding-top: 5px; }
.sel-layer .eye-cell { border-right: 0; }
.thumb { position: relative; flex: none; margin-left: 2px; width: 62px; height: 84px; display: flex; align-items: center; justify-content: center; }
.t-text span { font: 20px/20px "DejaVu Serif", serif; color: #333; }
.t-text.plain { padding-top: 4px; }
.brackets { position: absolute; left: 0; top: 0; }
.thumb.t-bg { margin: 2px 0 0 4px; width: 58px; height: 80px; background: #fff; border: 1px solid #222; }
.l-name { margin: 5px 0 0 7px; font-size: 12px; color: #333; }
.bg .l-name { margin-left: 9px; }
.l-name.small { font-size: 11px; letter-spacing: -.1px; }
.l-lock { margin: 5px 11px 0 auto; }
.l-empty { flex: 1; background: #e8e8e8; }
.l-foot { flex: 0 0 24px; display: flex; align-items: center; gap: 14px; padding-left: 105px; background: #f0f0f0; border-top: 1px solid #dedede; }
.fx { font: italic 13px/13px "Liberation Serif", serif; color: #888; width: 14px; }
.l-grip { flex: 0 0 8px; display: flex; justify-content: center; background: #f0f0f0; border-top: 2px solid #c8c8c8; border-bottom: 1px solid #aaa; padding-left: 44px; }
.l-grip .grip { margin: 0; height: 5px; }

.props { width: 244px; height: 195px; background: #f0f0f0; font-size: 12px; box-shadow: inset 1px 0 0 #ddd; }
.p-row { display: flex; align-items: center; }
.inp { display: flex; align-items: center; background: #f6f6f6; border: 1px solid #d4d4d4; padding-left: 3px; color: #555; font-size: 11px; white-space: nowrap; }
.i-wh { width: 75px; height: 18px; }
.i-xy { width: 75px; height: 20px; font-size: 12px; }
.i-ang { width: 47px; height: 17px; margin-left: 54px; }
.i-op { width: 55px; height: 20px; margin-left: 2px; }
.r1 { height: 17px; overflow: hidden; }
.p-lab { margin-left: 8px; width: 100px; font-size: 12px; }
.p-ico { margin-left: 9px; }
.p-ico.b { margin-left: 12px; }
.p-w { margin-left: 11px; width: 17px; font-size: 11px; }
.r2 { height: 20px; margin-top: 8px; }
.p-xy { margin-left: 14px; width: 16px; font-size: 11px; }
.p-h { margin-left: 13px; width: 15px; font-size: 11px; }
.r3 { height: 20px; margin-top: 8px; }
.p-deg { margin-left: 5px; }
.r4 { height: 20px; margin-top: 17px; }
.p-off { margin-left: 9px; width: 43px; font-size: 12px; }
.p-txt { color: #333; margin-left: 6px; }
.cb { position: relative; flex: none; width: 11px; height: 11px; border-radius: 2px; }
.cb.empty { background: #f6f6f6; border: 1px solid #c4c4c4; }
.cb.on { background: #666; }
.cb.on::after { content: ""; position: absolute; left: 4px; top: 1px; width: 3px; height: 7px; border: solid #fff; border-width: 0 1.500px 1.500px 0; transform: rotate(40deg); }
.lock-frame { margin-left: 12px; }
.p-bottom { display: flex; margin-top: 10px; }
.p-left { flex: 0 0 155px; padding-left: 9px; }
.p-chk { display: flex; align-items: center; gap: 7px; height: 20px; color: #333; }
.p-right .p-chk { height: 22.500px; }
.p-op { display: flex; align-items: center; height: 20px; margin: 2px 0 0 20px; font-size: 12px; }
.w-mode { width: 52px; height: 21px; margin: 7px 0 0 15px; padding-left: 8px; background: #f4f4f4; color: #aaa; border-color: #e8e8e8; }
.w-mode .chev { border: 0; }

.timer {
  position: absolute;
  left: 1462px;
  top: 625px;
  width: 49px;
  height: 49px;
  border-radius: 50%;
  background: linear-gradient(160deg, #2f8cf0, #4aa8f5 60%, #7cc6fb);
  border: 2px solid #d8f4fb;
  box-shadow: 0 2px 4px rgba(0,0,0,.25);
  color: #e6f6ff;
  font-size: 13px;
  line-height: 45px;
  text-align: center;
}
.ime {
  position: absolute;
  left: 1605px;
  top: 801px;
  width: 123px;
  height: 34px;
  display: flex;
  align-items: center;
  gap: 11px;
  padding-left: 40px;
}
.ime::before {
  content: "";
  position: absolute;
  left: 28px;
  top: 6px;
  right: 0;
  height: 28px;
  background: #fff;
  border: 1px solid #4d94c8;
  border-right: 0;
}
.ime > * { position: relative; z-index: 1; }
.ime .ime-q {
  position: absolute;
  left: 0;
  top: 0;
  width: 34px;
  height: 34px;
  border-radius: 50%;
  background: #2a7de1;
}
.ime-q::before { content: ""; position: absolute; left: 6px; top: 6px; width: 22px; height: 22px; border-radius: 50%; background: #2a7de1; border: 5px solid #fff; }
.ime-q i { position: absolute; left: 21px; top: 21px; width: 7px; height: 7px; border-radius: 50%; background: #6fc96f; z-index: 1; }
.ime-zh { font-size: 13px; font-weight: 700; color: #1f7fc0; margin-top: 6px; }
.ime-p { font-size: 11px; color: #1f7fc0; margin-top: 4px; }
.ime svg { margin-top: 6px; }

.ink { position: absolute; left: 480px; top: 400px; pointer-events: none; }
.ink g { stroke-width: 3.600px; }
.ink path { vector-effect: non-scaling-stroke; }
```
